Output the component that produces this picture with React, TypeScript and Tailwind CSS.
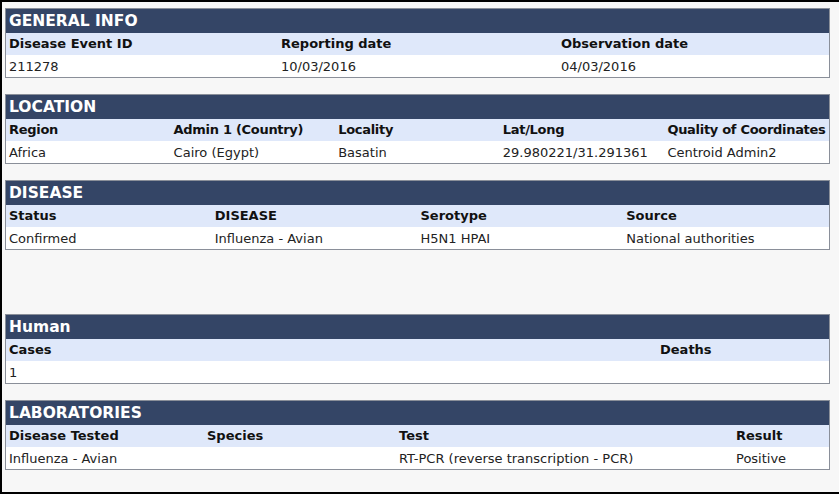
import React from 'react';

type Section = {
  title: string;
  cols: string;
  labels: string[];
  values: string[];
  tight?: boolean;
};

const sections: (Section | null)[] = [
  {
    title: 'GENERAL INFO',
    cols: 'grid-cols-[272px_280px_1fr]',
    labels: ['Disease Event ID', 'Reporting date', 'Observation date'],
    values: ['211278', '10/03/2016', '04/03/2016'],
  },
  {
    title: 'LOCATION',
    cols: 'grid-cols-5',
    labels: ['Region', 'Admin 1 (Country)', 'Locality', 'Lat/Long', 'Quality of Coordinates'],
    values: ['Africa', 'Cairo (Egypt)', 'Basatin', '29.980221/31.291361', 'Centroid Admin2'],
    tight: true,
  },
  {
    title: 'DISEASE',
    cols: 'grid-cols-4',
    labels: ['Status', 'DISEASE', 'Serotype', 'Source'],
    values: ['Confirmed', 'Influenza - Avian', 'H5N1 HPAI', 'National authorities'],
  },
  null,
  {
    title: 'Human',
    cols: 'grid-cols-[651px_1fr]',
    labels: ['Cases', 'Deaths'],
    values: ['1', ''],
  },
  {
    title: 'LABORATORIES',
    cols: 'grid-cols-[198px_192px_337px_1fr]',
    labels: ['Disease Tested', 'Species', 'Test', 'Result'],
    values: ['Influenza - Avian', '', 'RT-PCR (reverse transcription - PCR)', 'Positive'],
  },
];

const Panel: React.FC<{ s: Section }> = ({ s }) => (
  <div className="border border-[#8a8f99] bg-white">
    <div className="h-6 bg-[#344566] px-[3px] text-[15.5px] font-bold leading-[25px] text-white">{s.title}</div>
    <div
      className={`grid ${s.cols} h-[22px] bg-[#dfe8fa] text-[13px] font-bold leading-[22px] text-[#111] ${
        s.tight ? 'tracking-[-0.3px]' : ''
      }`}
    >
      {s.labels.map((l, i) => (
        <div key={i} className="whitespace-nowrap px-[3px]">{l}</div>
      ))}
    </div>
    <div className={`grid ${s.cols} h-[22px] bg-white text-[13px] leading-[23px] text-[#222]`}>
      {s.values.map((v, i) => (
        <div key={i} className="whitespace-nowrap px-[3px]">{v}</div>
      ))}
    </div>
  </div>
);

export default function App() {
  return (
    <div
      className="h-[494px] w-[839px] overflow-hidden border-b-2 border-l-2 border-t-2 border-black bg-[#f7f7f7]"
      style={{ fontFamily: '"DejaVu Sans", Verdana, sans-serif' }}
    >
      <div className="flex w-[828px] flex-col gap-4 pl-[3px] pt-[6px]">
        {sections.map((s, i) =>
          s ? <Panel key={i} s={s} /> : <div key={i} className="h-8" />
        )}
      </div>
    </div>
  );
}
